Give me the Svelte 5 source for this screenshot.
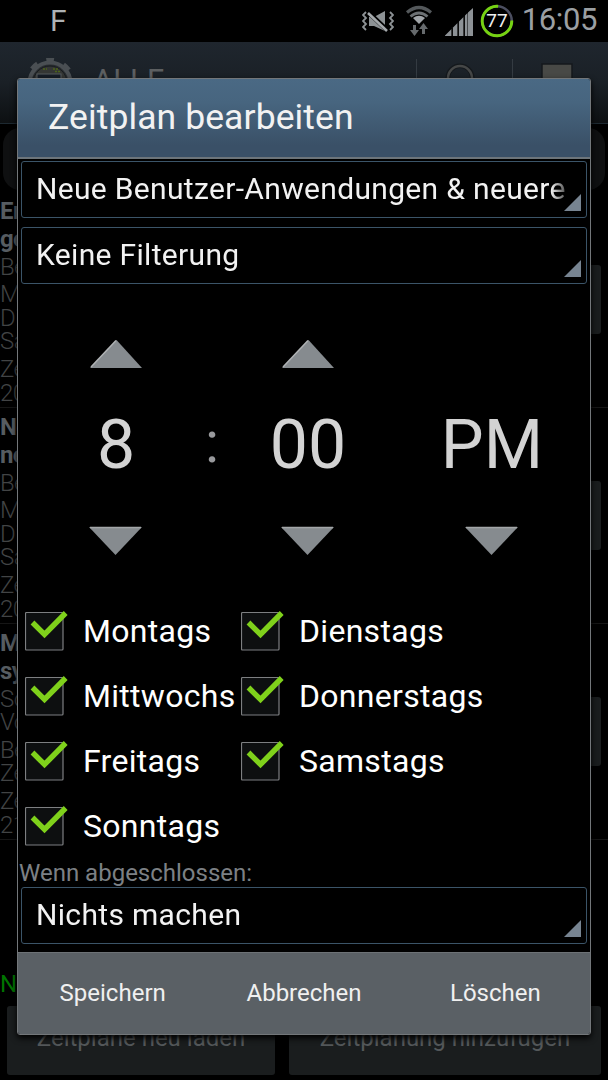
<script>
	let hour = $state(8);
	let minute = $state(0);
	let period = $state('PM');

	let days = $state([
		{ name: 'Montags', checked: true },
		{ name: 'Dienstags', checked: true },
		{ name: 'Mittwochs', checked: true },
		{ name: 'Donnerstags', checked: true },
		{ name: 'Freitags', checked: true },
		{ name: 'Samstags', checked: true },
		{ name: 'Sonntags', checked: true }
	]);

	// Schedules in the list behind the dialog
	const schedules = [
		{ title: ['Er', 'ge'], groups: [['Be'], ['Mo', 'Di', 'Sa'], ['Ze', '20']] },
		{ title: ['Ne', 'ne'], groups: [['Be'], ['Mo', 'Di', 'Sa'], ['Ze', '20']] },
		{ title: ['Mi', 'sy'], groups: [['So', 'Vo'], ['Be', 'Ze'], ['Ze', '21']] }
	];

	const minuteText = $derived(minute.toString().padStart(2, '0'));

	function changeHour(step) {
		hour = ((hour - 1 + step + 12) % 12) + 1;
	}

	function changeMinute(step) {
		minute = (minute + step + 60) % 60;
	}
</script>

{#snippet up()}
	<svg width="54" height="30" viewBox="0 0 54 30">
		<path d="M1 29L27.500 1L53 29Z" fill="#868b8f" />
		<path d="M2 28L27 1.500" stroke="#b0b3b5" stroke-width="1.500" />
	</svg>
{/snippet}

{#snippet down()}
	<svg width="54" height="30" viewBox="0 0 54 30">
		<path d="M0 1H53L26.500 29Z" fill="#868b8f" />
		<path d="M1 1.500H52" stroke="#a3a6a8" stroke-width="1.500" />
	</svg>
{/snippet}

{#snippet select(text)}
	<button class="select">
		<span class="select-text">{text}</span>
		<svg class="corner" width="17" height="17" viewBox="0 0 17 17">
			<path d="M17 0V17H0Z" fill="#778491" />
		</svg>
	</button>
{/snippet}

<div class="screen">
	<div class="status-bar">
		<span class="notification">F</span>
		<div class="status-icons">
			<svg class="vibrate" width="32" height="24" viewBox="0 0 32 24">
				<path d="M4 2L1 5L4 8L1 11L4 14L1 17L4 20M28 2L31 5L28 8L31 11L28 14L31 17L28 20" fill="none" stroke="#8d9295" stroke-width="1.800" />
				<path d="M7 7H12L23 1V21L12 16H7Z" fill="#8d9295" />
				<path d="M6 2L25 20" stroke="#000" stroke-width="4.500" />
				<path d="M6 3L25 21" stroke="#a5a9ac" stroke-width="2.600" />
			</svg>
			<svg class="wifi" width="28" height="32" viewBox="0 0 28 32">
				<path d="M2 7.500Q14 -2.500 26 7.500" fill="none" stroke="#54585b" stroke-width="3.200" />
				<path d="M5.500 11.500Q14 4.500 22.500 11.500" fill="none" stroke="#6c7073" stroke-width="2.800" />
				<path d="M8 13Q14 8.500 20 13L14 19Z" fill="#a0a4a8" />
				<path d="M9.500 20V27M18.500 29V22" stroke="#666a6d" stroke-width="3" />
				<path d="M5 25H14L9.500 31ZM14 24L18.500 18L23 24Z" fill="#666a6d" />
			</svg>
			<svg class="signal" width="28" height="28" viewBox="0 0 28 28">
				<path d="M0 28V27.500L6.500 21V28ZM8 28V19.500L12.500 15V28ZM14 28V13.500L18.500 9V28ZM20 28V7.500L22.500 5V28ZM23 28V4.500L28 0V28Z" fill="#8d9296" />
				<path d="M7.200 19V28M13.200 14V28M19.200 8V28" stroke="#111" stroke-width="1" />
			</svg>
			<svg class="battery" width="34" height="34" viewBox="0 0 34 34">
				<circle cx="17" cy="17" r="14.800" fill="none" stroke="#4b4e60" stroke-width="2.500" />
				<circle cx="17" cy="17" r="14.800" fill="none" stroke="#76d312" stroke-width="2.900" stroke-dasharray="71 93" transform="rotate(-2 17 17)" />
				<text x="17" y="23" text-anchor="middle">77</text>
			</svg>
		</div>
		<span class="clock">16:05</span>
	</div>

	<div class="action-bar">
		<svg class="logo" width="50" height="50" viewBox="0 0 50 50">
			<circle cx="25" cy="25" r="20.500" fill="#292d30" stroke="#4a4f53" stroke-width="4" />
			<circle cx="25" cy="25" r="23" fill="none" stroke="#4a4f53" stroke-width="4.500" stroke-dasharray="7.500 10.560" transform="rotate(-99 25 25)" />
			<circle cx="25" cy="25" r="17" fill="#343634" stroke="#171b1f" stroke-width="1" />
			<path d="M18 11H22M28 11H34M30 13.500H36" stroke="#4c6419" stroke-width="1.500" stroke-dasharray="2 1" />
			<rect x="12" y="16" width="24" height="16" fill="#161d26" stroke="#555a5e" stroke-width="1" />
		</svg>
		<span class="filter">ALLE</span>
		<div class="action">
			<svg width="32" height="36" viewBox="0 0 32 36">
				<circle cx="15" cy="15" r="12.300" fill="none" stroke="#14181c" stroke-width="4.500" />
				<circle cx="15" cy="15" r="12" fill="none" stroke="#454747" stroke-width="2.500" />
				<path d="M23 24L30 33" stroke="#454747" stroke-width="3" />
			</svg>
		</div>
		<div class="action">
			<svg width="32" height="36" viewBox="0 0 32 36">
				<rect x="1" y="1" width="30" height="32" fill="#484946" stroke="#14181c" stroke-width="1.500" />
			</svg>
		</div>
	</div>

	<div class="tab"></div>

	<div class="schedules">
		{#each schedules as schedule}
			<div class="schedule">
				<div class="lines">
					{#each schedule.title as line}
						<div class="schedule-title">{line}</div>
					{/each}
					{#each schedule.groups as group}
						<div class="group">
							{#each group as line}
								<div>{line}</div>
							{/each}
						</div>
					{/each}
				</div>
				<div class="run"></div>
			</div>
		{/each}
	</div>

	<div class="message">N</div>

	<div class="page-buttons">
		<button class="reload">Zeitpläne neu laden</button>
		<button class="add">Zeitplanung hinzufügen</button>
	</div>

	<div class="dialog">
		<h1>Zeitplan bearbeiten</h1>

		<div class="filters">
			{@render select('Neue Benutzer-Anwendungen & neuere')}
			{@render select('Keine Filterung')}
		</div>

		<div class="time-picker">
			<div class="time-column">
				<button onclick={() => changeHour(1)} aria-label="Stunde erhöhen">{@render up()}</button>
				<span class="time-value">{hour}</span>
				<button onclick={() => changeHour(-1)} aria-label="Stunde verringern">{@render down()}</button>
			</div>
			<span class="colon">:</span>
			<div class="time-column">
				<button onclick={() => changeMinute(1)} aria-label="Minute erhöhen">{@render up()}</button>
				<span class="time-value">{minuteText}</span>
				<button onclick={() => changeMinute(-1)} aria-label="Minute verringern">{@render down()}</button>
			</div>
			<div class="time-column period">
				<div class="no-arrow"></div>
				<span class="time-value">{period}</span>
				<button onclick={() => (period = period === 'PM' ? 'AM' : 'PM')} aria-label="Tageshälfte">{@render down()}</button>
			</div>
		</div>

		<div class="days">
			{#each days as day}
				<button class="day" onclick={() => (day.checked = !day.checked)}>
					<svg width="44" height="42" viewBox="0 0 44 42">
						<rect x="0.500" y="2.500" width="37.500" height="37.500" rx="1" fill="#0d0f10" stroke="#7d7f81" stroke-width="1.200" />
						{#if day.checked}
							<path d="M7.500 12.500L19.500 24.500L40.700 3" fill="none" stroke="#7fd11b" stroke-width="5.400" />
						{/if}
					</svg>
					<span>{day.name}</span>
				</button>
			{/each}
		</div>

		<div class="when-done">Wenn abgeschlossen:</div>
		{@render select('Nichts machen')}

		<div class="dialog-buttons">
			<button>Speichern</button>
			<button>Abbrechen</button>
			<button>Löschen</button>
		</div>
	</div>
</div>

<style>
	:global(body) {
		background: #000;
	}

	.screen,
	.screen * {
		box-sizing: border-box;
	}

	.screen {
		position: relative;
		width: 608px;
		height: 1080px;
		overflow: hidden;
		background: #000;
		font-family: Roboto, 'Liberation Sans', sans-serif;
	}

	button {
		padding: 0;
		border: none;
		background: none;
		color: inherit;
		font: inherit;
		text-align: left;
	}

	svg {
		display: block;
		flex: none;
	}

	/* Status bar */
	.status-bar {
		display: flex;
		align-items: flex-start;
		height: 42px;
		padding-left: 50px;
		padding-right: 11px;
		color: #9b9fa3;
	}

	.notification {
		font-size: 30px;
		line-height: 42px;
		color: #aeb2b5;
	}

	.status-icons {
		display: flex;
		margin-left: auto;
	}

	.vibrate {
		margin: 10px 11px 0 0;
	}

	.wifi {
		margin: 5px 12px 0 0;
	}

	.signal {
		margin: 8px 7px 0 0;
	}

	.battery {
		margin-top: 4px;
	}

	.battery text {
		font-size: 19px;
		fill: #f0f0f0;
	}

	.clock {
		margin-left: 8px;
		font-size: 31px;
		line-height: 39px;
		letter-spacing: -0.4px;
	}

	/* Action bar */
	.action-bar {
		display: flex;
		height: 82px;
		background: linear-gradient(#1f262e, #1a2026 50%, #0d1012);
		border-bottom: 1px solid #1d2931;
	}

	.logo {
		margin: 16px 0 0 25px;
	}

	.filter {
		flex: 1;
		margin-left: 18px;
		font-size: 30.5px;
		line-height: 77px;
		letter-spacing: 0.4px;
		color: #5c5f61;
	}

	.action {
		width: 96px;
		height: 48px;
		margin-top: 17px;
		padding: 4px 0 0 28px;
		border-left: 1px solid #343b42;
	}

	/* List behind the dialog */
	.tab {
		height: 62px;
		margin: 4px 3px 2px;
		border-radius: 17px;
		background: #0f1011;
	}

	.schedule {
		display: flex;
		justify-content: space-between;
		height: 216px;
		padding: 6px 7px 0 0;
		border-bottom: 1px solid #161616;
		color: #424445;
		font-size: 24px;
		font-weight: 300;
		letter-spacing: -0.6px;
	}

	.lines {
		width: 17px;
		overflow: hidden;
	}

	.schedule-title {
		color: #565c61;
		font-weight: 700;
		line-height: 27.5px;
	}

	.group {
		margin-top: 4.4px;
		line-height: 23.5px;
	}

	.schedule-title + .group {
		margin-top: 2.6px;
	}

	.run {
		width: 60px;
		height: 69px;
		margin-top: 67px;
		border-radius: 3px;
		background: #1a1d1e;
	}

	.message {
		height: 166px;
		padding: 130px 0 0 0;
		overflow: hidden;
		color: #007400;
		font-size: 24px;
		line-height: 28px;
	}

	.page-buttons {
		display: flex;
		gap: 14px;
		padding: 0 7px;
	}

	.page-buttons button {
		height: 69px;
		padding-bottom: 4px;
		border-radius: 3px;
		background: #1a1d1e;
		color: #54585a;
		font-size: 24px;
		line-height: 65px;
		text-align: center;
	}

	.page-buttons .reload {
		width: 268px;
	}

	.page-buttons .add {
		width: 312px;
	}

	/* Dialog */
	.dialog {
		position: absolute;
		top: 78px;
		left: 17px;
		width: 574px;
		height: 957px;
		border: 1px solid #73777a;
		border-radius: 3px;
		background: #000;
		box-shadow: 0 3px 6px #000;
		overflow: hidden;
	}

	h1 {
		height: 80px;
		margin: 0;
		padding-left: 30px;
		border-bottom: 2px solid #6d757b;
		background: linear-gradient(#4a6984, #47657f 30%, #3a5067 85%);
		color: #f2f2f2;
		font-size: 35.5px;
		font-weight: 400;
		line-height: 76px;
		letter-spacing: 0.1px;
	}

	.filters {
		display: grid;
		gap: 9px;
		padding-top: 2px;
	}

	.select {
		position: relative;
		display: block;
		width: 566px;
		height: 57px;
		margin-left: 3px;
		padding: 0 19px 2px 14px;
		border: 1px solid #3b5468;
		border-radius: 3px;
		color: #f2f2f2;
		font-size: 30px;
		line-height: 52px;
		letter-spacing: 0.33px;
	}

	.select-text {
		display: block;
		overflow: hidden;
		white-space: nowrap;
		mask-image: linear-gradient(to right, #000 515px, #0004 531px);
	}

	.corner {
		position: absolute;
		right: 5px;
		bottom: 6px;
	}

	.time-picker {
		display: flex;
		align-items: flex-start;
		height: 314px;
		padding: 55px 0 0 11px;
	}

	.time-column {
		display: flex;
		flex-direction: column;
		align-items: center;
		width: 174px;
	}

	.time-column.period {
		width: 194px;
	}

	.no-arrow {
		height: 30px;
	}

	.time-value {
		margin: 35px 0 39px;
		color: #d3d3d3;
		font-size: 68px;
		line-height: 83px;
	}

	.colon {
		width: 18px;
		padding-top: 64px;
		color: #98999c;
		font-size: 58px;
		line-height: 78px;
		text-align: center;
	}

	.days {
		display: grid;
		grid-template-columns: 216px 1fr;
		padding-left: 7px;
	}

	.day {
		display: flex;
		align-items: center;
		gap: 14px;
		height: 65px;
		color: #fff;
		font-size: 32px;
		letter-spacing: 0.3px;
		white-space: nowrap;
	}

	.when-done {
		height: 29px;
		padding-left: 1px;
		color: #7c8085;
		font-size: 24px;
		line-height: 30px;
	}

	.dialog-buttons {
		display: flex;
		height: 83px;
		margin-top: 8px;
		border-top: 1px solid #6d7276;
		background: #5a6065;
	}

	.dialog-buttons button {
		width: 190px;
		padding-bottom: 3px;
		color: #f0f0f0;
		font-size: 24px;
		line-height: 76px;
		text-align: center;
	}

	.dialog-buttons button:nth-child(2) {
		width: 194px;
	}
</style>
